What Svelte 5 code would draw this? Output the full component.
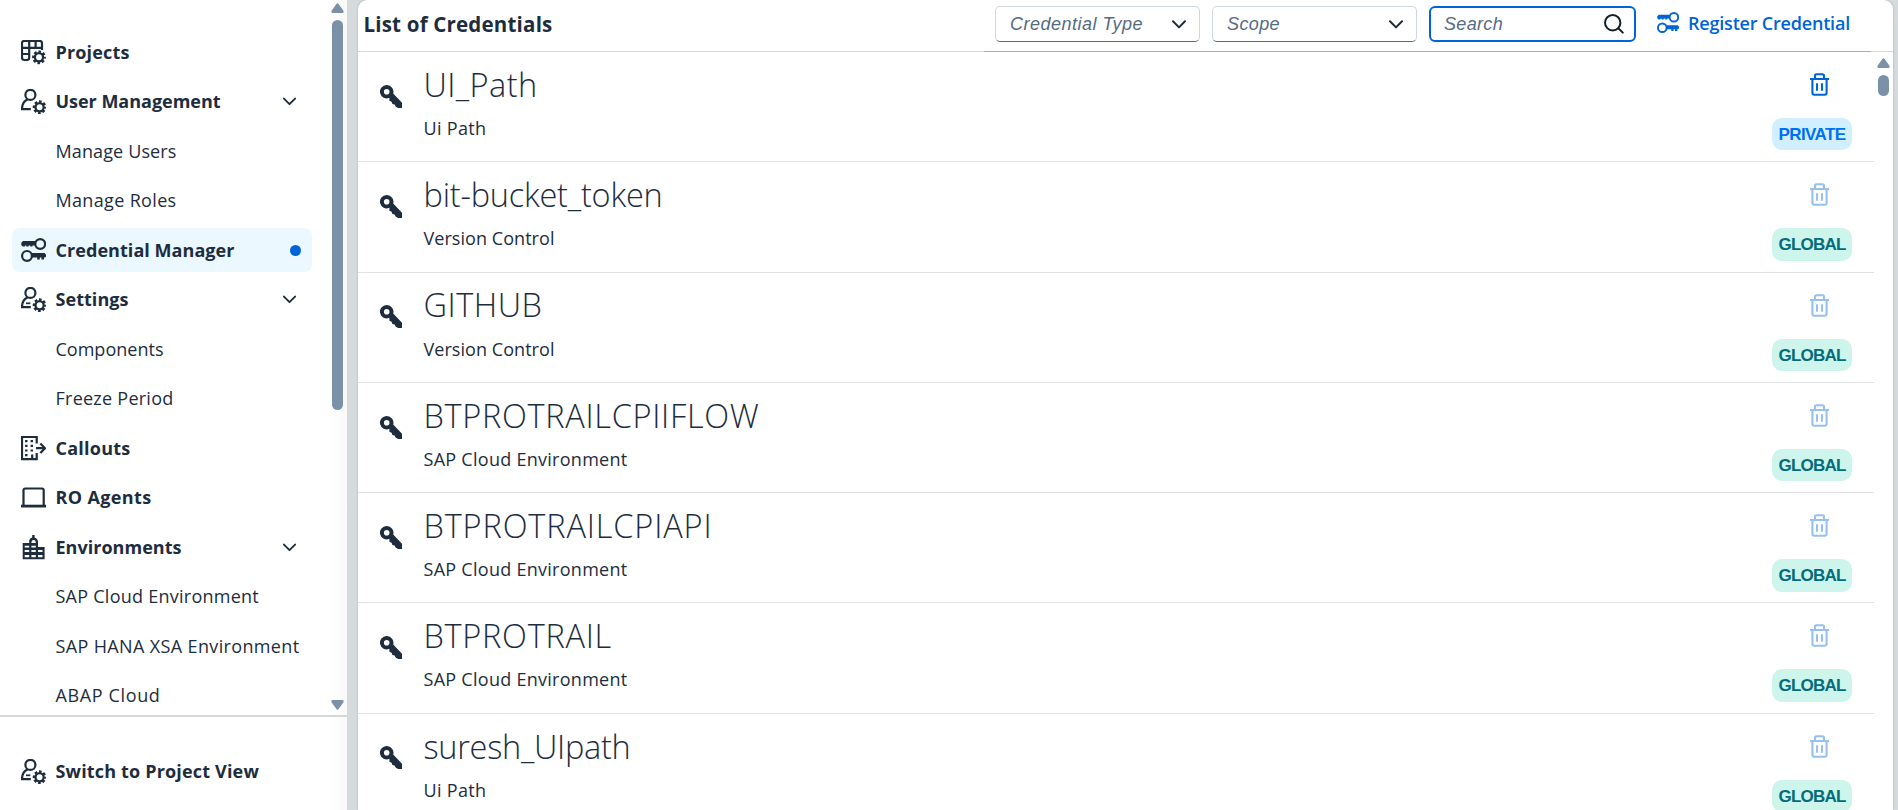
<script>
  const nav = [
    { label: 'Projects', icon: 'projects', width: 74 },
    { label: 'User Management', icon: 'user', width: 165, open: true },
    { label: 'Manage Users', width: 121 },
    { label: 'Manage Roles', width: 121 },
    { label: 'Credential Manager', icon: 'keys', width: 179, selected: true },
    { label: 'Settings', icon: 'user-line', width: 73, open: true },
    { label: 'Components', width: 108 },
    { label: 'Freeze Period', width: 118 },
    { label: 'Callouts', icon: 'callouts', width: 75 },
    { label: 'RO Agents', icon: 'laptop', width: 96 },
    { label: 'Environments', icon: 'building', width: 126, open: true },
    { label: 'SAP Cloud Environment', width: 203.5 },
    { label: 'SAP HANA XSA Environment', width: 244 },
    { label: 'ABAP Cloud', width: 105 }
  ];

  const typeWidths = { 'Ui Path': 63, 'Version Control': 131, 'SAP Cloud Environment': 204 };

  const credentials = [
    { name: 'UI_Path', type: 'Ui Path', scope: 'PRIVATE', width: 114 },
    { name: 'bit-bucket_token', type: 'Version Control', scope: 'GLOBAL', width: 239 },
    { name: 'GITHUB', type: 'Version Control', scope: 'GLOBAL', width: 119 },
    { name: 'BTPROTRAILCPIIFLOW', type: 'SAP Cloud Environment', scope: 'GLOBAL', width: 336 },
    { name: 'BTPROTRAILCPIAPI', type: 'SAP Cloud Environment', scope: 'GLOBAL', width: 289 },
    { name: 'BTPROTRAIL', type: 'SAP Cloud Environment', scope: 'GLOBAL', width: 188.5 },
    { name: 'suresh_UIpath', type: 'Ui Path', scope: 'GLOBAL', width: 207 }
  ];

  // Spreads the letters so that a label takes the given width.
  function fit(node, width) {
    const natural = node.getBoundingClientRect().width;
    node.style.letterSpacing = (width - natural) / node.textContent.length + 'px';
  }
</script>

{#snippet gear(cx, cy)}
  <circle {cx} {cy} r="4.1" fill="none" stroke="currentColor" stroke-width="2.3" />
  <circle {cx} {cy} r="5.7" fill="none" stroke="currentColor" stroke-width="2.4" stroke-dasharray="2.6 1.877" stroke-dashoffset="1.3" />
{/snippet}

{#snippet icon(name)}
  <svg class="icon" viewBox="0 0 25 25" fill="none" stroke="currentColor" stroke-width="2.2">
    {#if name === 'projects'}
      <path d="M21 10V3.2Q21 1 18.8 1H3.2Q1 1 1 3.2V17.8Q1 20 3.2 20H6Q8.2 20 8.2 17.8V1M1 7.8H21M1 14H8.2M14.6 1V7.8" />
      {@render gear(18, 17.3)}
    {:else if name === 'user' || name === 'user-line'}
      <circle cx="9.4" cy="5.9" r="5" />
      <path d="M6.6 10.4C2.6 12 1 15.4 1 20.1H9.8" />
      {#if name === 'user-line'}<path stroke-width="1.7" d="M5 16.3H9.4" />{/if}
      {@render gear(18.6, 18.2)}
    {:else if name === 'keys'}
      <circle cx="19.2" cy="6" r="4.9" />
      <circle cx="6" cy="17.9" r="4.9" />
      <path fill="currentColor" stroke="none" d="M2 3H14.5V7.5H11.5V8.6H9.3V7.5H7.6V8.6H5.2V7.5H4V8.6H1.6L0.3 7V4.8ZM10.8 15H23.6L25 16.8V18.6L24 19.6H23V21.6H20.4V19.6H18.8V21.6H16.2V19.6H10.8Z" />
    {:else if name === 'callouts'}
      <path d="M15.7 7.5V1H1V23.2H15.7V17M11.2 23V18.6M15 12.2H24M19.4 7.4L24 12.2L19.4 17" />
      <path stroke-width="2.4" stroke-dasharray="2.2 2.5" d="M5.3 4V21M10.8 4V17" />
    {:else if name === 'laptop'}
      <path d="M2.5 21V5.3Q2.5 3.5 4.3 3.5H20.9Q22.7 3.5 22.7 5.3V21" />
      <path stroke-width="2.8" d="M0 21.1H25" />
    {:else}
      <path fill="currentColor" stroke="none" fill-rule="evenodd" d="M1.7 8H8.2V5.5Q8.6 3 11.2 2.4V0H13.6V2.4Q16.7 3.4 17 6.5V12H23.6V24.3H1.7ZM10.4 8H14.8Q14.8 5 12.6 5T10.4 8ZM3.7 10.7V12.4H8.2V10.7ZM10.4 10.7V12.4H14.8V10.7ZM3.7 15V17H8.2V15ZM10.4 15V17H14.8V15ZM17 15V17H21.5V15ZM3.7 20V22.2H8.2V20ZM10.4 20V22.2H14.8V20ZM17 20V22.2H21.5V20Z" />
    {/if}
  </svg>
{/snippet}

{#snippet arrow(down)}
  <svg class="arrow" class:down viewBox="0 0 13 10"><path fill="#7b91a8" d="M5.4 .9Q6.5 -.4 7.6 .9L12.3 7.4Q13.3 10 11.2 10H1.8Q-.3 10 .7 7.4Z" /></svg>
{/snippet}

{#snippet chevron()}
  <svg class="chevron" viewBox="0 0 14 9"><path fill="none" stroke="currentColor" stroke-width="2" stroke-linecap="round" stroke-linejoin="round" d="M1 1.3L7 7.4L13 1.3" /></svg>
{/snippet}

<div class="page">
  <aside>
    <div class="nav-area">
      <nav>
        {#each nav as item}
          <div class="item" class:selected={item.selected} class:child={!item.icon}>
            {#if item.icon}{@render icon(item.icon)}{/if}
            <span class="label"><span use:fit={item.width}>{item.label}</span></span>
            {#if item.open}<span class="toggle">{@render chevron()}</span>{/if}
            {#if item.selected}<span class="dot"></span>{/if}
          </div>
        {/each}
      </nav>
      <div class="scroll side-scroll">
        {@render arrow(false)}
        <div class="thumb"></div>
        {@render arrow(true)}
      </div>
    </div>
    <div class="switch">
      <div class="item">
        {@render icon('user-line')}
        <span class="label"><span use:fit={203.5}>Switch to Project View</span></span>
      </div>
    </div>
  </aside>

  <main>
    <header>
      <h1><span use:fit={189}>List of Credentials</span></h1>
      <div class="tools">
        <div class="field"><i use:fit={133}>Credential Type</i>{@render chevron()}</div>
        <div class="field"><i use:fit={53}>Scope</i>{@render chevron()}</div>
        <div class="field search">
          <i use:fit={59}>Search</i>
          <svg viewBox="0 0 20 20" width="20" height="20" fill="none" stroke="#131e29" stroke-width="2"><circle cx="8.7" cy="8.7" r="7.7" /><path stroke-linecap="round" d="M14.3 14.3L18.8 18.6" /></svg>
        </div>
        <div class="register">{@render icon('keys')}<span use:fit={162}>Register Credential</span></div>
      </div>
    </header>
    <div class="content">
      <div class="list">
        {#each credentials as c}
          <div class="row">
            <svg class="key" viewBox="0 0 22 23"><path fill="#1d2d3e" fill-rule="evenodd" d="M6.7 0A6.7 6.7 0 0 1 13.2 8.6L22.2 18V22.9H18.2L15.8 21.8L14.6 19.6L12.4 18.9L11.6 16.8L9.4 15.8V12.8A6.7 6.7 0 1 1 6.7 0ZM6.7 3.9A2.8 2.8 0 1 0 6.7 9.5A2.8 2.8 0 1 0 6.7 3.9Z" /></svg>
            <div class="info">
              <div class="name"><span use:fit={c.width}>{c.name}</span></div>
              <div class="type"><span use:fit={typeWidths[c.type]}>{c.type}</span></div>
            </div>
            <div class="side">
              <svg class="trash" class:off={c.scope === 'GLOBAL'} viewBox="0 0 19 23" fill="none" stroke="#0064d9" stroke-width="2.1"><path d="M0 6H19M5 6V2.8Q5 1.2 6.6 1.2H12.4Q14 1.2 14 2.8V6M2.4 6V19.8Q2.4 21.7 4.3 21.7H14.7Q16.6 21.7 16.6 19.8V6M7 10.2V17.8M12 10.2V17.8" /></svg>
              <div class="badge" class:private={c.scope === 'PRIVATE'}><span use:fit={67}>{c.scope}</span></div>
            </div>
          </div>
        {/each}
      </div>
      <div class="scroll list-scroll">
        {@render arrow(false)}
        <div class="thumb"></div>
      </div>
    </div>
  </main>
</div>

<style>
  :global(body) { margin: 0; overflow: hidden; }
  .page {
    display: flex;
    width: 1898px;
    height: 810px;
    box-sizing: border-box;
    padding-right: 5px;
    overflow: hidden;
    background: #d5dadd;
    color: #1d2d3e;
    font: 18px "Open Sans", Roboto, sans-serif;
    white-space: nowrap;
  }
  svg { display: block; flex: none; }
  aside {
    display: flex;
    flex-direction: column;
    width: 347px;
    margin-right: 11px;
    background: linear-gradient(90deg, #fff 330px, #f9f9f9);
    flex: none;
  }
  .nav-area {
    display: flex;
    height: 715px;
    overflow: hidden;
    border-bottom: 2px solid #d5d7d9;
  }
  nav {
    width: 300px;
    padding: 30px 19px 0 12px;
  }
  .item {
    display: flex;
    align-items: center;
    height: 44px;
    margin-bottom: 5.5px;
    padding-left: 9px;
    border-radius: 8px;
    font-weight: 700;
  }
  .child { padding-left: 43.5px; font-weight: 400; }
  .icon { width: 25px; height: 25px; }
  .icon + .label { margin-left: 9.5px; }
  .label { flex: 1; padding-bottom: 1px; }
  .selected { background: #ebf8ff; }
  .dot {
    width: 11px;
    height: 11px;
    margin-right: 11.5px;
    border-radius: 50%;
    background: #0064d9;
  }
  .toggle { margin-right: 16px; }
  .chevron { width: 14px; height: 9px; }
  .toggle :global(.chevron) { width: 13px; }
  .scroll {
    display: flex;
    flex-direction: column;
    align-items: center;
    width: 13px;
  }
  .arrow { width: 13px; height: 10px; }
  .down { transform: rotate(180deg); margin-top: auto; margin-bottom: 5px; }
  .thumb {
    width: 11px;
    margin-top: 7px;
    border-radius: 6px;
    background: #7b91a8;
  }
  .side-scroll { padding-top: 3px; }
  .side-scroll .thumb { height: 390px; }
  .switch { padding: 32px 12px 0; }
  main {
    display: flex;
    flex-direction: column;
    flex: 1;
    min-width: 0;
    background: #fff;
    border-radius: 9px 9px 0 0;
    box-shadow: 0 0 2px rgba(34, 53, 72, 0.3);
  }
  header {
    display: flex;
    justify-content: space-between;
    height: 51.95px;
    flex: none;
    box-sizing: border-box;
    border-bottom: 1px solid #d5d7d9;
  }
  h1 {
    margin: 0;
    padding: 12px 0 0 5.5px;
    font-size: 20.5px;
    line-height: 25px;
    font-weight: 700;
  }
  .tools {
    display: flex;
    gap: 12px;
    width: 876px;
    height: 45px;
    margin-right: 22px;
    padding: 6px 0 0 11px;
    border-bottom: 1px solid #a5afb9;
  }
  .field {
    display: flex;
    align-items: center;
    justify-content: space-between;
    box-sizing: border-box;
    width: 205px;
    height: 36px;
    padding: 0 13px 0 14px;
    border: 1px solid #d0d7de;
    border-bottom-color: #556b82;
    border-radius: 5px;
    color: #1d2d3e;
  }
  .field i { color: #556b82; font-family: "Liberation Sans", sans-serif; }
  .search {
    width: 207px;
    padding: 0 10.5px 0 13px;
    border: 2px solid #0064d9;
    border-radius: 6px;
  }
  .register {
    display: flex;
    align-items: center;
    gap: 9px;
    height: 34px;
    padding-left: 9px;
    color: #0064d9;
    font-weight: 600;
  }
  .register :global(.icon) { width: 22px; height: 22px; }
  .content { display: flex; flex: 1; min-height: 0; overflow: hidden; }
  .list { width: 1516px; }
  .row {
    display: flex;
    box-sizing: border-box;
    height: 110.3px;
    padding-left: 22px;
    border-bottom: 1px solid #e1e3e5;
  }
  .key { width: 22px; height: 23px; margin-top: 32.7px; }
  .info { flex: 1; padding: 11.8px 0 0 21.5px; }
  .name { font-size: 32.5px; font-weight: 300; line-height: 42px; }
  .type { line-height: 24px; margin-top: 10.2px; }
  .side { width: 80px; margin-right: 22px; }
  .trash { width: 19px; height: 23px; margin: 21px 0 0 37.5px; }
  .off { opacity: 0.4; }
  .badge {
    height: 32.5px;
    margin-top: 22px;
    border-radius: 10px;
    background: #cef5ec;
    color: #046c7a;
    font-family: "Liberation Sans", sans-serif;
    font-size: 17px;
    font-weight: 700;
    line-height: 33.5px;
    text-align: center;
  }
  .private { background: #d1efff; color: #0070f2; }
  .list-scroll { margin-left: 2.5px; padding-top: 6px; }
  .list-scroll .thumb { height: 21px; }
</style>
